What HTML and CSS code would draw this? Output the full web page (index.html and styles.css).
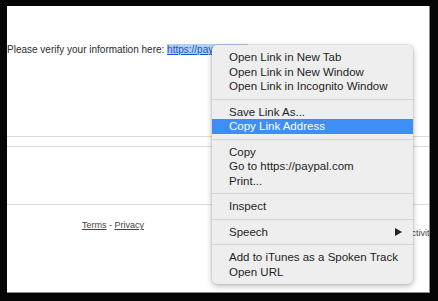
FILE: index.html
```html
<!DOCTYPE html>
<html lang="en">
<head>
    <meta charset="UTF-8">
    <title>Verify your information</title>
    <link rel="stylesheet" href="styles.css">
</head>
<body>
    <div class="screen">
        <p class="message">Please verify your information here: <a href="#" class="link">https://paypal.com</a></p>

        <hr class="rule rule-first">
        <hr class="rule rule-second">
        <hr class="rule rule-third">

        <div class="footer">
            <span class="terms"><a href="#">Terms</a> - <a href="#">Privacy</a></span>
            <span class="activity">Last account activity: 0 minutes ago</span>
        </div>

        <div class="context-menu">
            <div class="menu-item">Open Link in New Tab</div>
            <div class="menu-item">Open Link in New Window</div>
            <div class="menu-item">Open Link in Incognito Window</div>
            <div class="menu-sep"></div>
            <div class="menu-item">Save Link As...</div>
            <div class="menu-item active">Copy Link Address</div>
            <div class="menu-sep"></div>
            <div class="menu-item">Copy</div>
            <div class="menu-item">Go to https://paypal.com</div>
            <div class="menu-item">Print...</div>
            <div class="menu-sep"></div>
            <div class="menu-item">Inspect</div>
            <div class="menu-sep"></div>
            <div class="menu-item submenu">Speech <span class="arrow"></span></div>
            <div class="menu-sep"></div>
            <div class="menu-item">Add to iTunes as a Spoken Track</div>
            <div class="menu-item">Open URL</div>
        </div>
    </div>
</body>
</html>
```

FILE: styles.css
```css
* {
    margin: 0;
    padding: 0;
    box-sizing: border-box;
}

body {
    width: 438px;
    height: 301px;
    background: #050505;
    overflow: hidden;
    font-family: 'Liberation Sans', Arial, sans-serif;
    padding-top: 6px;
}

.screen {
    margin-left: 7px;
    width: 423px;
    height: 287px;
    background: #fff;
    border-right: 1px solid #8c8c8c;
    border-bottom: 1px solid #8c8c8c;
    position: relative;
    overflow: hidden;
}

.message {
    padding-top: 37px;
    font-size: 10px;
    line-height: 14px;
    color: #2b2b2b;
    white-space: nowrap;
}

.link {
    color: #1a56c4;
    background: #b4cff5;
    text-decoration: underline;
}

.rule {
    border: none;
    border-top: 1px solid #dcdcdc;
}

.rule-first {
    margin-top: 79px;
}

.rule-second {
    margin-top: 9px;
}

.rule-third {
    margin-top: 57px;
}

.footer {
    display: flex;
    padding-left: 75px;
    margin-top: 14px;
    font-size: 9px;
    line-height: 12px;
    color: #444;
    white-space: nowrap;
}

.footer a {
    color: #444;
    text-decoration: underline;
}

.activity {
    margin-left: 209px;
    margin-top: 8px;
}

.context-menu {
    position: absolute;
    left: 205px;
    top: 39px;
    width: 201px;
    padding: 5px 0;
    background: #eeeeee;
    border-radius: 5px;
    box-shadow: 0 2px 6px rgba(0, 0, 0, 0.28), 0 0 0 0.5px rgba(0, 0, 0, 0.12);
    font-size: 11.5px;
    color: #1e1e1e;
}

.menu-item {
    height: 14.5px;
    line-height: 14.5px;
    padding: 0 11px 0 17px;
    white-space: nowrap;
}

.menu-item.active {
    background: #3f8ef7;
    color: #fff;
}

.submenu {
    display: flex;
    justify-content: space-between;
    align-items: center;
}

.arrow {
    width: 0;
    height: 0;
    border-top: 4px solid transparent;
    border-bottom: 4px solid transparent;
    border-left: 7px solid #222;
}

.menu-sep {
    height: 1px;
    margin: 5px 0;
    background: #d4d4d4;
}
```
